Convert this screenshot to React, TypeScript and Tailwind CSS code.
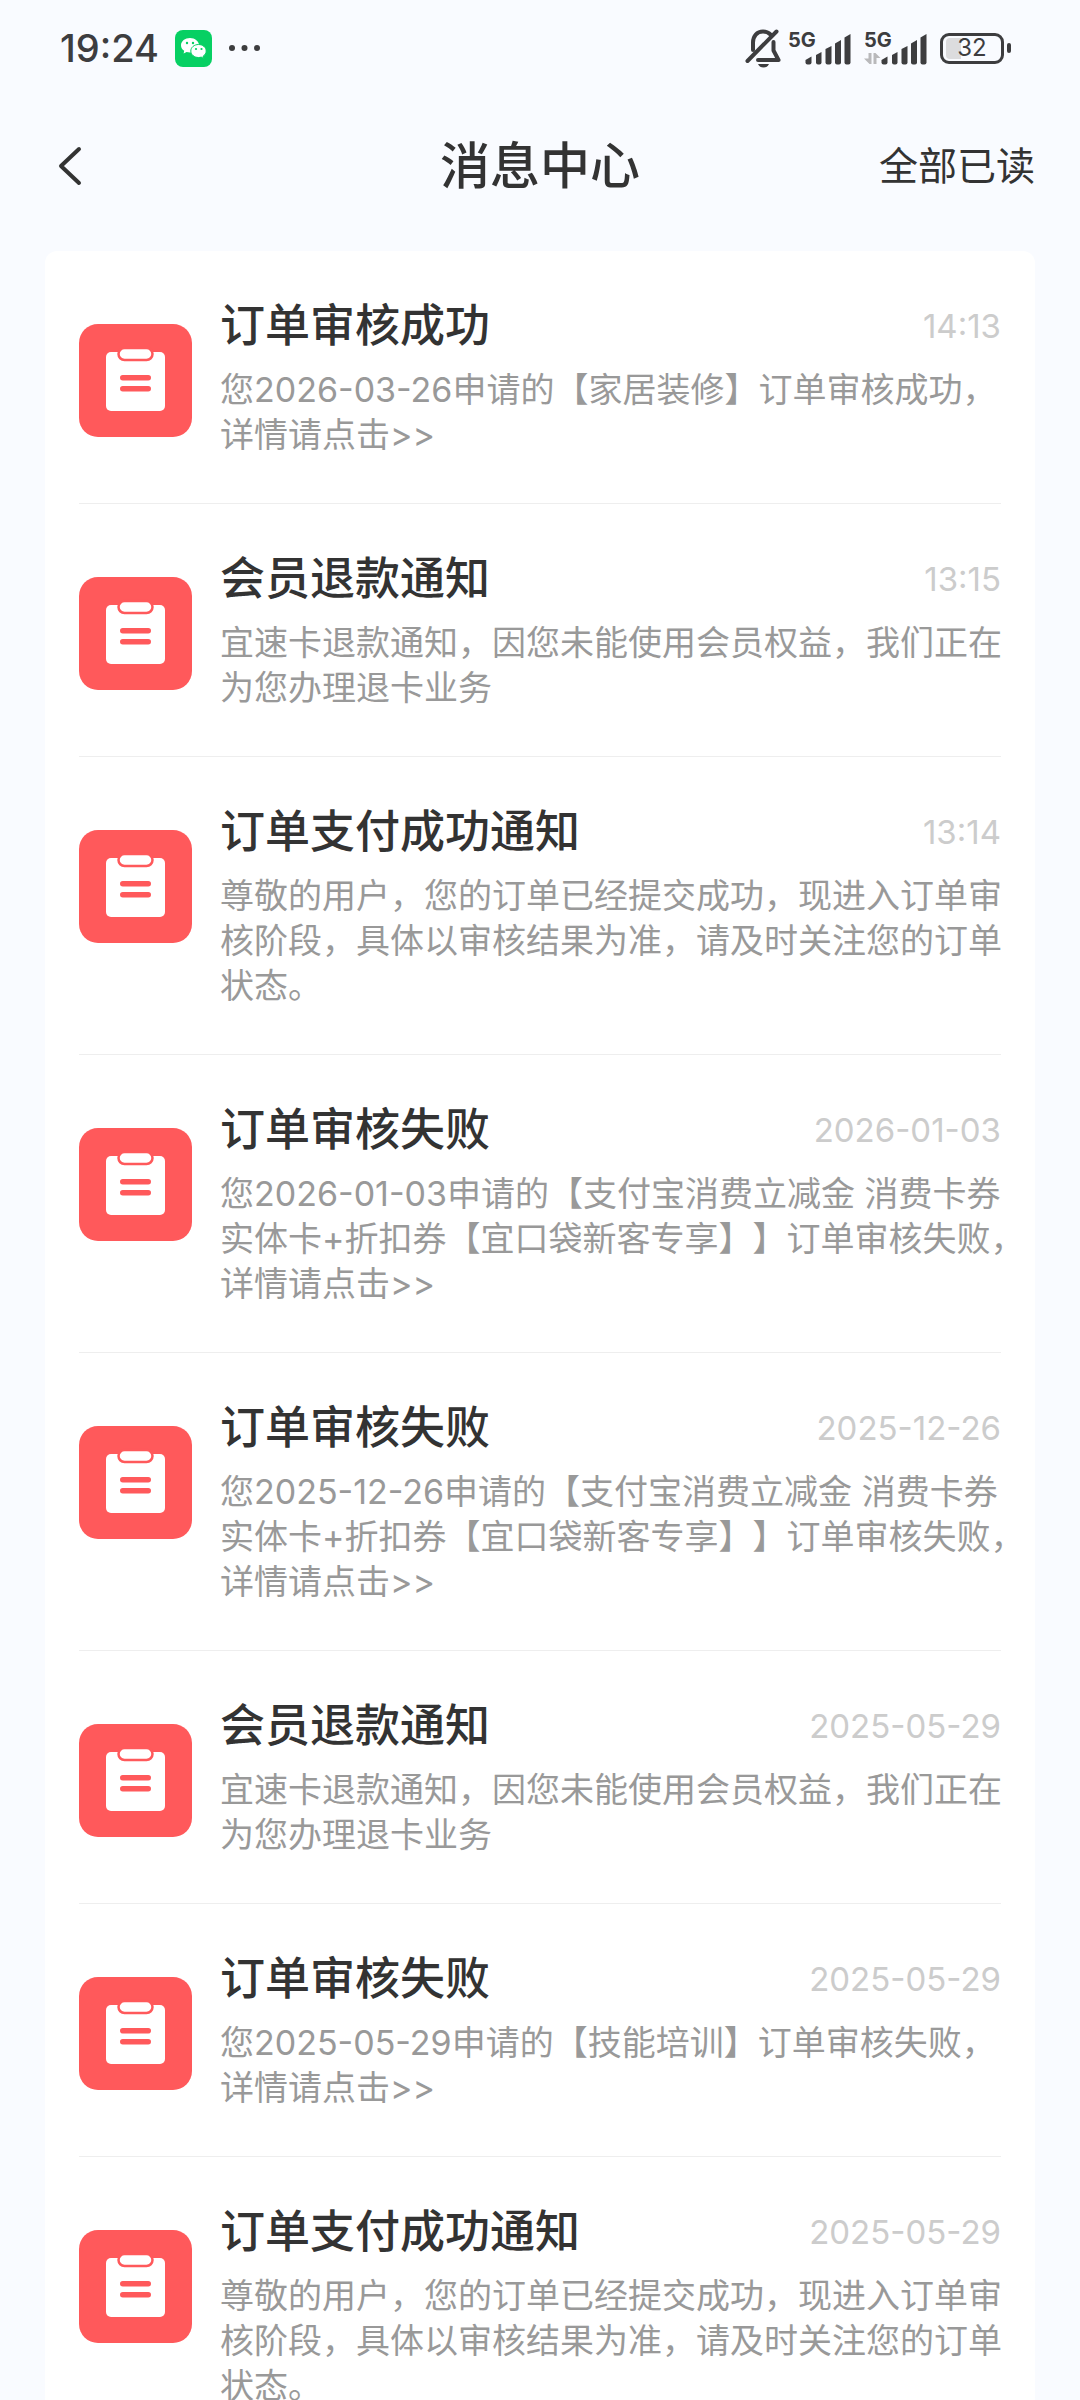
interface Message {
  id: number
  title: string
  time: string
  content: string
}

const messages: Message[] = [
  { id: 1, title: "订单审核成功", time: "14:13", content: "您2026-03-26申请的【家居装修】订单审核成功，\n详情请点击>>" },
  { id: 2, title: "会员退款通知", time: "13:15", content: "宜速卡退款通知，因您未能使用会员权益，我们正在为您办理退卡业务" },
  { id: 3, title: "订单支付成功通知", time: "13:14", content: "尊敬的用户，您的订单已经提交成功，现进入订单审核阶段，具体以审核结果为准，请及时关注您的订单状态。" },
  { id: 4, title: "订单审核失败", time: "2026-01-03", content: "您2026-01-03申请的【支付宝消费立减金 消费卡券\n实体卡+折扣券【宜口袋新客专享】】订单审核失败，\n详情请点击>>" },
  { id: 5, title: "订单审核失败", time: "2025-12-26", content: "您2025-12-26申请的【支付宝消费立减金 消费卡券\n实体卡+折扣券【宜口袋新客专享】】订单审核失败，\n详情请点击>>" },
  { id: 6, title: "会员退款通知", time: "2025-05-29", content: "宜速卡退款通知，因您未能使用会员权益，我们正在为您办理退卡业务" },
  { id: 7, title: "订单审核失败", time: "2025-05-29", content: "您2025-05-29申请的【技能培训】订单审核失败，\n详情请点击>>" },
  { id: 8, title: "订单支付成功通知", time: "2025-05-29", content: "尊敬的用户，您的订单已经提交成功，现进入订单审核阶段，具体以审核结果为准，请及时关注您的订单状态。" },
]

function WechatIcon() {
  return (
    <svg className="h-[37px] w-[37px]" viewBox="0 0 37 37" aria-hidden="true">
      <rect width="37" height="37" rx="8" fill="#07d063" />
      <path d="M15 8c-5 0-9 3.200-9 7.300 0 2.300 1.200 4.200 3.200 5.500l-.6 2.700 3-1.500c1 .3 2.200.5 3.400.5 5 0 9-3.200 9-7.200S20 8 15 8z" fill="#fff" />
      <path d="M23.500 14.500c-4.300 0-7.700 2.900-7.700 6.500s3.400 6.500 7.700 6.500c1 0 1.900-.1 2.700-.4l2.400 1.300-.5-2.200c1.900-1.200 3.100-3.100 3.100-5.200 0-3.600-3.400-6.500-7.700-6.500z" fill="#fff" stroke="#07d063" />
      <circle cx="12" cy="13" r="1.200" fill="#07d063" />
      <circle cx="18" cy="13" r="1.200" fill="#07d063" />
      <circle cx="21" cy="19" r="1.100" fill="#07d063" />
      <circle cx="26.500" cy="19" r="1.100" fill="#07d063" />
    </svg>
  )
}

function BellOffIcon() {
  return (
    <svg className="h-[40px] w-[37px]" viewBox="0 0 37 40" fill="none" stroke="#3d3d3f" strokeWidth="4" strokeLinecap="round" strokeLinejoin="round" aria-hidden="true">
      <path d="M8 22V14.500C8 8 12 3.500 18 3.500c3 0 5.500 1 7.500 3" />
      <path d="M28.500 14v8.500l5 9.500H13" />
      <path d="M2.500 33 31.500 3.500" />
      <path d="M13 36h11c-1 2.500-3 3.500-5.500 3.500s-4.500-1-5.500-3.500z" fill="#3d3d3f" stroke="none" />
    </svg>
  )
}

function Signal({ active = false }: { active?: boolean }) {
  return (
    <div className="relative h-[36px] w-[63px]">
      <span className="absolute top-0 left-0 text-[20px] leading-[20px] font-bold">5G</span>
      <svg className="h-full w-full" viewBox="0 0 63 36" fill="#3d3d3f" aria-hidden="true">
        {active && (
          <g fill="#b9b9bb">
            <path d="M4.500 23h3v11h-2L0 28.500h4.500z" />
            <path d="M9.500 34h3v-6h4L11.500 23h-2z" />
          </g>
        )}
        <path d="M17.500 30l6-3.500v6q0 2-2 2h-2q-2 0-2-2z" />
        <path d="M28 25l5.500-3v10.500q0 2-2 2h-1.500q-2 0-2-2z" />
        <path d="M37.500 19l6-3v16.500q0 2-2 2h-2q-2 0-2-2z" />
        <path d="M47 13.500l6-3.500v22.500q0 2-2 2h-2q-2 0-2-2z" />
        <path d="M56.500 7.500l6-3.500v28.500q0 2-2 2h-2q-2 0-2-2z" />
      </svg>
    </div>
  )
}

function StatusBar() {
  return (
    <div className="flex h-[96px] items-center justify-between pr-[69px] pl-[60px] text-[#3d3d3f]">
      <div className="flex items-center">
        <span className="w-[115px] text-[38px] leading-[48px] font-medium">19:24</span>
        <WechatIcon />
        <svg className="ml-[17px] h-[6px] w-[32px]" viewBox="0 0 32 6" fill="#3d3d3f" aria-hidden="true">
          <circle cx="3" cy="3" r="3" />
          <circle cx="15.500" cy="3" r="3" />
          <circle cx="28" cy="3" r="3" />
        </svg>
      </div>
      <div className="flex items-center">
        <BellOffIcon />
        <div className="ml-[6px] flex gap-[13px]">
          <Signal />
          <Signal active />
        </div>
        <div className="ml-[13px] flex items-center gap-[3px]">
          <div className="relative flex h-[31px] w-[64px] items-center justify-center rounded-[9px] border-[3px] border-[#3d3d3f]">
            <span className="absolute inset-y-[2px] left-[3px] w-[15px] rounded-l-[4px] bg-[#dcdcde]" />
            <span className="relative text-[24px] leading-[24px]">32</span>
          </div>
          <span className="h-[10px] w-[4px] rounded-[2px] bg-[#3d3d3f]" />
        </div>
      </div>
    </div>
  )
}

function ClipboardIcon() {
  return (
    <svg className="mt-[28px] h-[113px] w-[113px] shrink-0" viewBox="0 0 113 113" aria-hidden="true">
      <rect width="113" height="113" rx="19" fill="#ff595b" />
      <rect x="27" y="28" width="59" height="59" rx="5" fill="#fff" />
      <rect x="39.500" y="24" width="34" height="12" rx="6" fill="#fff" stroke="#ff595b" strokeWidth="2.500" />
      <rect x="41" y="51" width="31" height="5.500" rx="2.750" fill="#ff595b" />
      <rect x="41" y="62" width="31" height="5.500" rx="2.750" fill="#ff595b" />
    </svg>
  )
}

function MessageItem({ message }: { message: Message }) {
  return (
    <li className="flex gap-[28px] border-b border-[#eeeeee] pt-[45px] pb-[46px]">
      <ClipboardIcon />
      <div className="min-w-0 flex-1">
        <div className="flex items-center justify-between">
          <h2 className="text-[45px] leading-[60px] font-medium text-[#333333]">{message.title}</h2>
          <time className="text-[33px] leading-[45px] text-[#cccccc]">{message.time}</time>
        </div>
        {/* negative margin lets a closing comma hang into the card padding */}
        <p className="mt-[11px] -mr-[29px] text-[34px] leading-[45px] whitespace-pre-wrap text-[#999999] [text-spacing-trim:space-all]">
          {message.content}
        </p>
      </div>
    </li>
  )
}

export default function App() {
  return (
    <div lang="zh-CN" className="min-h-screen bg-[#f9fbff] font-['Inter','Noto_Sans_CJK_SC',sans-serif]">
      <StatusBar />
      <header className="grid h-[155px] grid-cols-3 items-start px-[45px] pt-[36px] text-[#333333]">
        <button type="button" aria-label="返回" className="flex h-[68px] w-[50px] items-center pl-[12px]">
          <svg className="h-[40px] w-[26px]" viewBox="0 0 26 40" fill="none" stroke="#333" strokeWidth="4" strokeLinecap="round" strokeLinejoin="round" aria-hidden="true">
            <path d="M22 3 4 20l18 17" />
          </svg>
        </button>
        <h1 className="text-center text-[50px] leading-[68px] font-medium">消息中心</h1>
        <button type="button" className="text-right text-[39px] leading-[68px]">全部已读</button>
      </header>
      <main className="mx-[45px] rounded-t-[12px] bg-white px-[34px]">
        <ul>
          {messages.map((message) => (
            <MessageItem key={message.id} message={message} />
          ))}
        </ul>
      </main>
    </div>
  )
}
